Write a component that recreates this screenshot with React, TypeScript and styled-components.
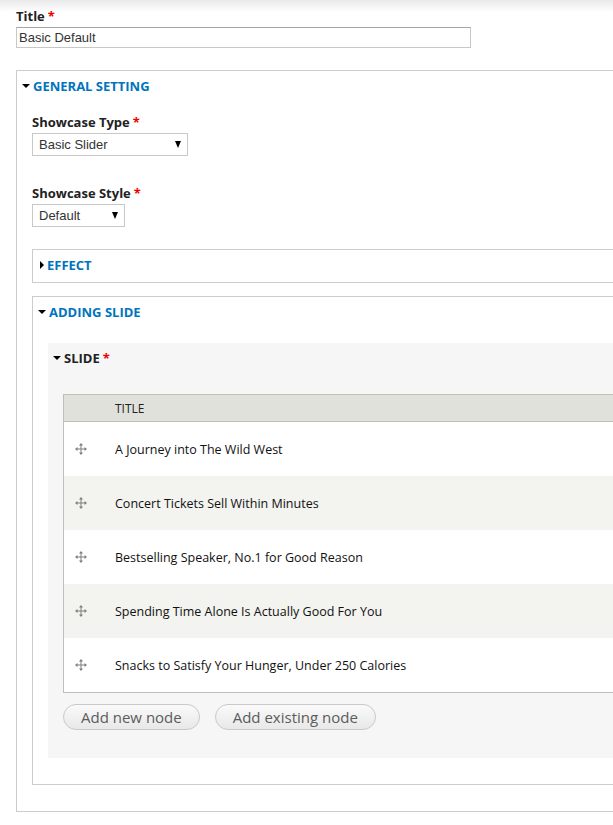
import React from "react";
import styled, { createGlobalStyle } from "styled-components";

const Global = createGlobalStyle`
  html, body { margin: 0; padding: 0; overflow: hidden; }
  body {
    background: linear-gradient(#e9e9e9 0px, #ffffff 12px) no-repeat;
    font-family: "Open Sans", "Liberation Sans", sans-serif;
    color: #222;
  }
`;

const Page = styled.div`
  width: 720px;
  padding: 8px 0 0 16px;
`;

const FieldLabel = styled.div`
  font-family: "Open Sans", sans-serif;
  font-weight: 700;
  font-size: 13px;
  line-height: 16px;
  color: #222;
  margin-bottom: 3px;
`;

const Star = styled.span`
  color: #e00;
  margin-left: 3px;
`;

const TextInput = styled.div`
  box-sizing: border-box;
  width: 455px;
  height: 21px;
  border: 1px solid #c8c8c8;
  border-top-color: #a6a6a6;
  padding: 0 2px;
  font-family: "Liberation Sans", Arial, sans-serif;
  font-size: 13px;
  line-height: 19px;
  color: #333;
`;

const Fieldset = styled.section<{ $mt?: number; $pb?: number }>`
  border: 1px solid #cccccc;
  border-right: none;
  margin-top: ${(p) => p.$mt ?? 0}px;
  padding-bottom: ${(p) => p.$pb ?? 0}px;
`;

const Legend = styled.div<{ $pl: number; $pb?: number }>`
  display: flex;
  align-items: center;
  gap: 3px;
  padding: 7px 0 ${(p) => p.$pb ?? 8}px ${(p) => p.$pl}px;
  font-family: "Open Sans", sans-serif;
  font-weight: 700;
  font-size: 13px;
  line-height: 16px;
  color: #0074bd;
  text-transform: uppercase;
`;

const Caret = styled.span<{ $open: boolean }>`
  width: 0;
  height: 0;
  ${(p) =>
    p.$open
      ? `border-left: 4px solid transparent; border-right: 4px solid transparent; border-top: 4px solid #000;`
      : `border-top: 4px solid transparent; border-bottom: 4px solid transparent; border-left: 4px solid #000;`}
`;

const FieldsetBody = styled.div`
  padding: 12px 0 0 15px;
`;

const FormItem = styled.div<{ $mt?: number }>`
  margin-top: ${(p) => p.$mt ?? 0}px;
`;

const Select = styled.div<{ $w: number }>`
  box-sizing: border-box;
  width: ${(p) => p.$w}px;
  height: 23px;
  border: 1px solid #c8c8c8;
  display: flex;
  align-items: center;
  justify-content: space-between;
  padding: 0 6px 0 6px;
  font-family: "Liberation Sans", Arial, sans-serif;
  font-size: 13px;
  color: #333;
`;

const SelectArrow = styled.span`
  width: 0;
  height: 0;
  border-left: 3.5px solid transparent;
  border-right: 3.5px solid transparent;
  border-top: 7px solid #000;
`;

const SlideBox = styled.div`
  background: #f6f6f6;
  margin: 15px 0 0 15px;
  padding: 0 0 28px 0;
`;

const SlideTitle = styled.div`
  display: flex;
  align-items: center;
  gap: 3px;
  padding: 7px 0 0 5px;
  font-family: "Open Sans", sans-serif;
  font-weight: 700;
  font-size: 13px;
  line-height: 16px;
  color: #222;
`;

const SlideContent = styled.div`
  padding-left: 15px;
`;

const Table = styled.div`
  margin-top: 28px;
  border: 1px solid #bfbfba;
  border-right: none;
  background: #fff;
`;

const HeadRow = styled.div`
  height: 26px;
  background: #e1e1dc;
  border-bottom: 1px solid #bfbfba;
  display: flex;
  align-items: center;
  padding-left: 51px;
  font-family: "Open Sans", sans-serif;
  font-size: 12px;
  color: #222;
`;

const Row = styled.div<{ $shade: boolean }>`
  height: 54px;
  display: flex;
  align-items: center;
  background: ${(p) => (p.$shade ? "#f3f3ef" : "#ffffff")};
  font-family: "Open Sans", sans-serif;
  font-size: 12.5px;
  color: #111;
`;

const Handle = styled.span`
  width: 51px;
  display: flex;
  padding-left: 11px;
  box-sizing: border-box;
`;

const Buttons = styled.div`
  display: flex;
  gap: 15px;
  margin-top: 11px;
`;

const Button = styled.button`
  height: 26px;
  padding: 0 17px;
  border: 1px solid #c9c9c9;
  border-radius: 14px;
  background: linear-gradient(#fafafa, #e8e8e8);
  font-family: "Open Sans", sans-serif;
  font-size: 15px;
  color: #5c5c5c;
  line-height: 24px;
`;

const Move = () => (
  <svg width="12" height="12" viewBox="0 0 12 12" fill="#7e7e7e">
    <rect x="5.5" y="1" width="1" height="10" />
    <rect x="1" y="5.5" width="10" height="1" />
    <polygon points="6,0 4,2.5 8,2.5" />
    <polygon points="6,12 4,9.5 8,9.5" />
    <polygon points="0,6 2.5,4 2.5,8" />
    <polygon points="12,6 9.5,4 9.5,8" />
  </svg>
);

const slides = [
  "A Journey into The Wild West",
  "Concert Tickets Sell Within Minutes",
  "Bestselling Speaker, No.1 for Good Reason",
  "Spending Time Alone Is Actually Good For You",
  "Snacks to Satisfy Your Hunger, Under 250 Calories",
];

export default function App() {
  return (
    <>
      <Global />
      <Page>
        <FieldLabel>
          Title<Star>*</Star>
        </FieldLabel>
        <TextInput>Basic Default</TextInput>

        <Fieldset $mt={22} $pb={26}>
          <Legend $pl={5}>
            <Caret $open />
            General Setting
          </Legend>
          <FieldsetBody>
            <FormItem>
              <FieldLabel>
                Showcase Type<Star>*</Star>
              </FieldLabel>
              <Select $w={156}>
                Basic Slider
                <SelectArrow />
              </Select>
            </FormItem>
            <FormItem $mt={29}>
              <FieldLabel>
                Showcase Style<Star>*</Star>
              </FieldLabel>
              <Select $w={93}>
                Default
                <SelectArrow />
              </Select>
            </FormItem>

            <Fieldset $mt={22}>
              <Legend $pl={7} $pb={9}>
                <Caret $open={false} />
                Effect
              </Legend>
            </Fieldset>

            <Fieldset $mt={13} $pb={26}>
              <Legend $pl={5}>
                <Caret $open />
                Adding Slide
              </Legend>
              <SlideBox>
                <SlideTitle>
                  <Caret $open />
                  <span>
                    SLIDE<Star>*</Star>
                  </span>
                </SlideTitle>
                <SlideContent>
                  <Table>
                    <HeadRow>TITLE</HeadRow>
                    {slides.map((s, i) => (
                      <Row key={s} $shade={i % 2 === 1}>
                        <Handle>
                          <Move />
                        </Handle>
                        {s}
                      </Row>
                    ))}
                  </Table>
                  <Buttons>
                    <Button>Add new node</Button>
                    <Button>Add existing node</Button>
                  </Buttons>
                </SlideContent>
              </SlideBox>
            </Fieldset>
          </FieldsetBody>
        </Fieldset>
      </Page>
    </>
  );
}
